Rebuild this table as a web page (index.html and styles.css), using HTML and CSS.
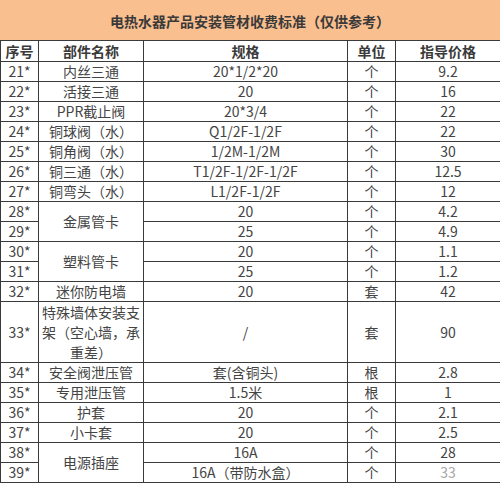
FILE: index.html
```html
<!DOCTYPE html>
<html lang="zh-CN">
<head>
<meta charset="utf-8">
<title>电热水器产品安装管材收费标准</title>
<link rel="stylesheet" href="styles.css">
</head>
<body>
<div class="sheet">
  <div class="title">电热水器产品安装管材收费标准（仅供参考）</div>
  <table class="grid">
    <colgroup>
      <col class="c-no"><col class="c-name"><col class="c-spec"><col class="c-unit"><col class="c-price">
    </colgroup>
    <thead>
      <tr><th>序号</th><th>部件名称</th><th>规格</th><th>单位</th><th>指导价格</th></tr>
    </thead>
    <tbody>
      <tr><td>21*</td><td>内丝三通</td><td>20*1/2*20</td><td>个</td><td>9.2</td></tr>
      <tr><td>22*</td><td>活接三通</td><td>20</td><td>个</td><td>16</td></tr>
      <tr><td>23*</td><td>PPR截止阀</td><td>20*3/4</td><td>个</td><td>22</td></tr>
      <tr><td>24*</td><td>铜球阀（水）</td><td>Q1/2F-1/2F</td><td>个</td><td>22</td></tr>
      <tr><td>25*</td><td>铜角阀（水）</td><td>1/2M-1/2M</td><td>个</td><td>30</td></tr>
      <tr><td>26*</td><td>铜三通（水）</td><td>T1/2F-1/2F-1/2F</td><td>个</td><td>12.5</td></tr>
      <tr><td>27*</td><td>铜弯头（水）</td><td>L1/2F-1/2F</td><td>个</td><td>12</td></tr>
      <tr><td>28*</td><td rowspan="2">金属管卡</td><td>20</td><td>个</td><td>4.2</td></tr>
      <tr><td>29*</td><td>25</td><td>个</td><td>4.9</td></tr>
      <tr><td>30*</td><td rowspan="2">塑料管卡</td><td>20</td><td>个</td><td>1.1</td></tr>
      <tr><td>31*</td><td>25</td><td>个</td><td>1.2</td></tr>
      <tr><td>32*</td><td>迷你防电墙</td><td>20</td><td>套</td><td>42</td></tr>
      <tr class="tall"><td>33*</td><td>特殊墙体安装支<br>架（空心墙，承<br>重差）</td><td>/</td><td>套</td><td>90</td></tr>
      <tr><td>34*</td><td>安全阀泄压管</td><td>套(含铜头)</td><td>根</td><td>2.8</td></tr>
      <tr><td>35*</td><td>专用泄压管</td><td>1.5米</td><td>根</td><td>1</td></tr>
      <tr><td>36*</td><td>护套</td><td>20</td><td>个</td><td>2.1</td></tr>
      <tr><td>37*</td><td>小卡套</td><td>20</td><td>个</td><td>2.5</td></tr>
      <tr><td>38*</td><td rowspan="2">电源插座</td><td>16A</td><td>个</td><td>28</td></tr>
      <tr><td>39*</td><td>16A（带防水盒）</td><td>个</td><td class="faded">33</td></tr>
    </tbody>
  </table>
</div>
</body>
</html>
```
FILE: styles.css
```css
html, body {
  margin: 0;
  padding: 0;
  background: #ffffff;
}
body {
  font-family: "Noto Sans CJK SC", "Noto Sans", sans-serif;
  font-size: 14px;
  color: #444444;
}
.sheet {
  width: 500px;
}
.title {
  height: 40px;
  background: #fabf8f;
  font-weight: bold;
  color: #3a3a3a;
  display: flex;
  align-items: center;
  justify-content: center;
  padding-top: 2px;
  box-sizing: border-box;
  padding-left: 0;
}
.grid {
  width: 500px;
  border-collapse: collapse;
  table-layout: fixed;
}
.c-no { width: 38px; }
.c-name { width: 105px; }
.c-spec { width: 204px; }
.c-unit { width: 48px; }
.c-price { width: 105px; }
.grid th, .grid td {
  border: 1px solid #3a3a3a;
  padding: 0;
  height: 19px;
  line-height: 19px;
  text-align: center;
  white-space: nowrap;
  overflow: hidden;
}
.grid th {
  font-weight: bold;
  color: #3a3a3a;
  height: 20px;
}
.grid .tall td {
  height: 60px;
  line-height: 20px;
}
.grid .faded {
  color: #a8a8a8;
}
```
